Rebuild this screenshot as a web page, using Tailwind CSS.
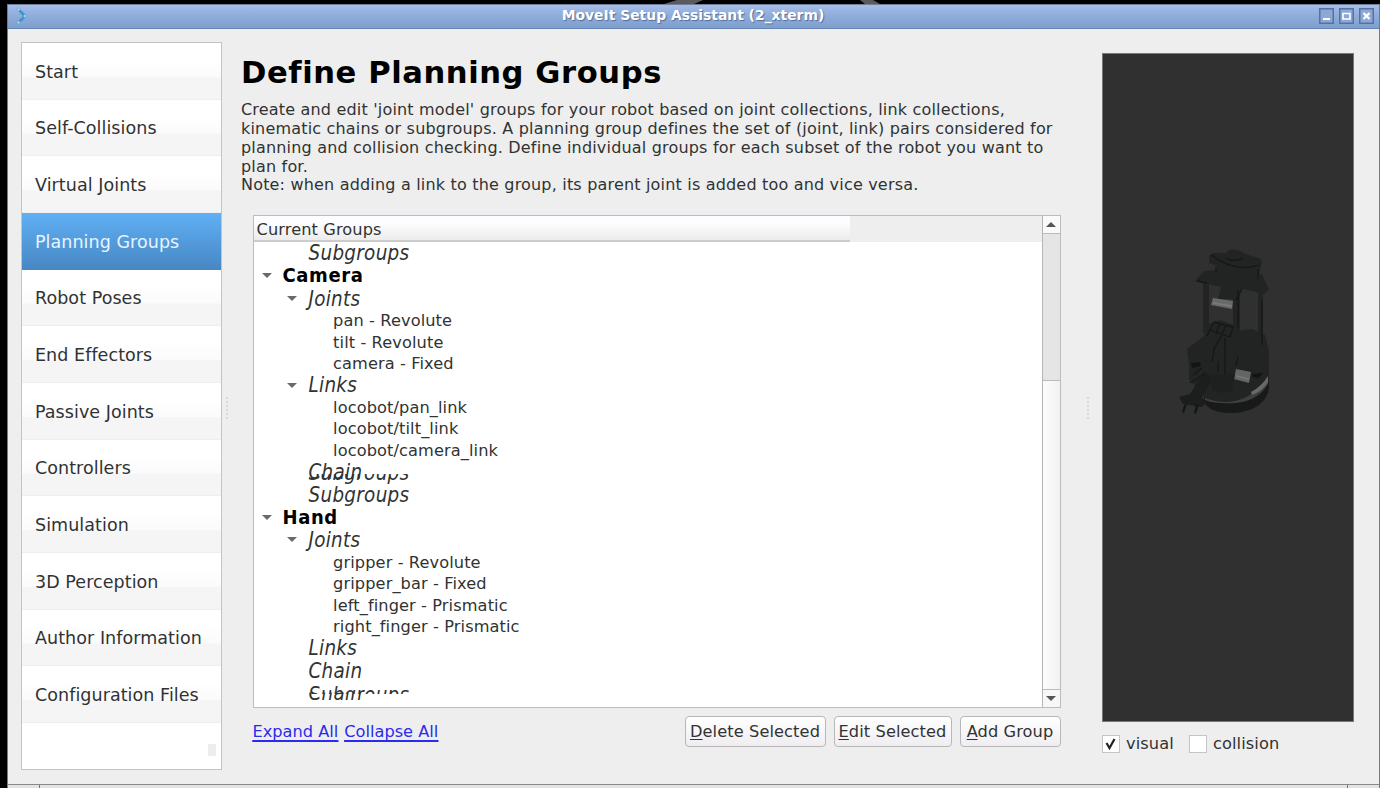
<!DOCTYPE html>
<html lang="en">
<head>
<meta charset="utf-8">
<title>MoveIt Setup Assistant</title>
<script src="https://cdn.jsdelivr.net/npm/@tailwindcss/browser@4"></script>
</head>
<body class="bg-black w-[1380px] h-[788px] overflow-hidden font-['DejaVu_Sans',sans-serif] text-[#303332] text-[16.2px] whitespace-nowrap">
<div class="flex flex-col h-[788px]">
  <svg class="block shrink-0" width="1380" height="4"><path d="M664 4l13-4h26l-9 4zM865 4l-5-4h13l7 4z" fill="#5d5a5e"/></svg>
  <div class="flex flex-col ml-[7px] h-[784px] bg-[#eeeeee] border-l border-r border-[#77797c]">
    <header class="flex items-center h-[25px] shrink-0 border-t border-b border-t-[#71809a] border-b-[#6584b3] bg-linear-to-b from-[#a5bde9] via-[#8eabda] to-[#7e9fcd] pl-[6px] pr-[5px] pb-[2px]">
      <svg width="16" height="20" viewBox="0 0 16 20"><path d="M3 3l4 1 6 6-6 6-4 1 3-4 3-3-3-3z" fill="#4093cb"/><g fill="#b5e6f7" stroke="#5aa9d6"><circle cx="4.500" cy="3.500" r="1.500"/><circle cx="11" cy="10" r="1.500"/><circle cx="4.500" cy="16.500" r="1.500"/></g></svg>
      <h1 class="flex-1 pl-[37px] pb-[2px] text-center text-white text-[13.9px] font-bold leading-5 [text-shadow:1px_1px_1px_#536d97]">MoveIt Setup Assistant (2_xterm)</h1>
      <div class="flex gap-[5px]">
        <svg width="15" height="16"><rect x=".75" y=".75" width="13.5" height="14.5" fill="#8da8d5" stroke="#56729f" stroke-width="1.5"/><path d="M4 11h7" stroke="#fff" stroke-width="2"/></svg>
        <svg width="15" height="16"><rect x=".75" y=".75" width="13.5" height="14.5" fill="#8da8d5" stroke="#56729f" stroke-width="1.5"/><path d="M4 5.5h7v5.500h-7z" fill="none" stroke="#fff" stroke-width="1.6"/></svg>
        <svg width="15" height="16"><rect x=".75" y=".75" width="13.5" height="14.500" fill="#8da8d5" stroke="#56729f" stroke-width="1.5"/><path d="M4.500 5l6 6m0-6l-6 6" stroke="#fff" stroke-width="2.300"/></svg>
      </div>
    </header>

    <main class="flex h-[755px] shrink-0">
      <nav class="ml-[13px] mt-[13px] w-[201px] h-[728px] border-[1.5px] border-[#c4c4c4] bg-white text-[17.5px] tracking-[0.06px] flex flex-col shrink-0">
        <div class="h-[56.67px] pl-[13px] pt-[2px] flex items-center bg-linear-to-b from-white from-30% via-[#fbfafc] via-60% to-[#f5f5f6] to-62% border-b border-[#eeedf0]">Start</div>
        <div class="h-[56.67px] pl-[13px] pt-[2px] flex items-center bg-linear-to-b from-white from-30% via-[#fbfafc] via-60% to-[#f5f5f6] to-62% border-b border-[#eeedf0]">Self-Collisions</div>
        <div class="h-[56.67px] pl-[13px] pt-[2px] flex items-center bg-linear-to-b from-white from-30% via-[#fbfafc] via-60% to-[#f5f5f6] to-62% border-b border-[#eeedf0]">Virtual Joints</div>
        <div class="h-[56.67px] pl-[13px] pt-px flex items-center bg-linear-to-b from-[#60b0f5] to-[#4787c3] text-[#e8f4ff]">Planning Groups</div>
        <div class="h-[56.67px] pl-[13px] pt-[2px] flex items-center bg-linear-to-b from-white from-30% via-[#fbfafc] via-60% to-[#f5f5f6] to-62% border-b border-[#eeedf0]">Robot Poses</div>
        <div class="h-[56.67px] pl-[13px] pt-[2px] flex items-center bg-linear-to-b from-white from-30% via-[#fbfafc] via-60% to-[#f5f5f6] to-62% border-b border-[#eeedf0]">End Effectors</div>
        <div class="h-[56.67px] pl-[13px] pt-[2px] flex items-center bg-linear-to-b from-white from-30% via-[#fbfafc] via-60% to-[#f5f5f6] to-62% border-b border-[#eeedf0]">Passive Joints</div>
        <div class="h-[56.67px] pl-[13px] pt-[2px] flex items-center bg-linear-to-b from-white from-30% via-[#fbfafc] via-60% to-[#f5f5f6] to-62% border-b border-[#eeedf0]">Controllers</div>
        <div class="h-[56.67px] pl-[13px] pt-[2px] flex items-center bg-linear-to-b from-white from-30% via-[#fbfafc] via-60% to-[#f5f5f6] to-62% border-b border-[#eeedf0]">Simulation</div>
        <div class="h-[56.67px] pl-[13px] pt-[2px] flex items-center bg-linear-to-b from-white from-30% via-[#fbfafc] via-60% to-[#f5f5f6] to-62% border-b border-[#eeedf0]">3D Perception</div>
        <div class="h-[56.67px] pl-[13px] pt-[2px] flex items-center bg-linear-to-b from-white from-30% via-[#fbfafc] via-60% to-[#f5f5f6] to-62% border-b border-[#eeedf0]">Author Information</div>
        <div class="h-[56.67px] pl-[13px] pt-[2px] flex items-center bg-linear-to-b from-white from-30% via-[#fbfafc] via-60% to-[#f5f5f6] to-62% border-b border-[#eeedf0]">Configuration Files</div>
        <div class="self-end mt-[21px] mr-[5px] w-2 h-3 bg-[#ededed]"></div>
      </nav>
      <div class="w-[19px] shrink-0 pl-[4px] pt-[368px]"><div class="w-[2px] h-[22px] bg-[repeating-linear-gradient(#d8d8d8_0_2px,transparent_2px_4px)]"></div></div>

      <section class="w-[820px] shrink-0 flex flex-col">
        <h2 class="mt-[25px] h-[38px] leading-[38px] text-[30.6px] tracking-[0.58px] font-bold text-black">Define Planning Groups</h2>
        <p class="mt-[9.400px] leading-[18.75px] text-[16px] tracking-[0.186px]">Create and edit 'joint model' groups for your robot based on joint collections, link collections,<br>kinematic chains or subgroups. A planning group defines the set of (joint, link) pairs considered for<br>planning and collision checking. Define individual groups for each subset of the robot you want to<br>plan for.<br>Note: when adding a link to the group, its parent joint is added too and vice versa.</p>
        <div class="ml-[11.500px] mt-[20px] w-[808px] h-[493px] border-[1.5px] border-[#bcbcbc] bg-white flex shrink-0">
          <div class="flex-1 overflow-hidden">
            <div class="h-[26px] bg-[#eeeeee]"><div class="w-[596px] h-[26px] pl-[3px] pt-[2px] leading-[24px] tracking-[0.1px] bg-linear-to-b from-[#fdfcff] from-30% to-[#ececec] border-b-2 border-[#cccccc]">Current Groups</div></div>
            <div class="leading-[21.4px] tracking-[0.1px]">
              <div class="h-[22.67px] pl-[55px] pt-px"><i class="font-['DejaVu_Sans_Condensed','DejaVu_Sans'] [font-stretch:condensed] text-[20.400px] tracking-[0.3px]">Subgroups</i></div>
              <div class="h-[22.67px] pl-[8px] flex items-center"><svg width="21" height="8"><path d="M0 1h10L5 6z" fill="#6a6a6a"/></svg><b class="font-['DejaVu_Sans_Condensed','DejaVu_Sans'] [font-stretch:condensed] text-[20px] tracking-[0.6px] text-black">Camera</b></div>
              <div class="h-[22.67px] pl-[33px] flex items-center"><svg width="22" height="8"><path d="M0 1h10L5 6z" fill="#6a6a6a"/></svg><i class="font-['DejaVu_Sans_Condensed','DejaVu_Sans'] [font-stretch:condensed] text-[20.400px] tracking-[0.3px] pt-px">Joints</i></div>
              <div class="h-[21.4px] pl-[79.6px]">pan - Revolute</div>
              <div class="h-[21.4px] pl-[79.6px]">tilt - Revolute</div>
              <div class="h-[21.4px] pl-[79.6px]">camera - Fixed</div>
              <div class="h-[22.67px] pl-[33px] flex items-center"><svg width="22" height="8"><path d="M0 1h10L5 6z" fill="#6a6a6a"/></svg><i class="font-['DejaVu_Sans_Condensed','DejaVu_Sans'] [font-stretch:condensed] text-[20.400px] tracking-[0.3px] pt-px">Links</i></div>
              <div class="h-[21.4px] pl-[79.6px]">locobot/pan_link</div>
              <div class="h-[21.4px] pl-[79.6px]">locobot/tilt_link</div>
              <div class="h-[21.4px] pl-[79.6px]">locobot/camera_link</div>
              <div class="relative h-[22.67px] pl-[55px] pt-px"><i class="font-['DejaVu_Sans_Condensed','DejaVu_Sans'] [font-stretch:condensed] text-[20.400px] tracking-[0.3px]">Chain</i><i class="absolute left-[55px] top-[2px] [clip-path:inset(11px_0_0_0)] font-['DejaVu_Sans_Condensed','DejaVu_Sans'] [font-stretch:condensed] text-[20.400px] tracking-[0.3px]">Subgroups</i></div>
              <div class="h-[22.67px] pl-[55px] pt-px"><i class="font-['DejaVu_Sans_Condensed','DejaVu_Sans'] [font-stretch:condensed] text-[20.400px] tracking-[0.3px]">Subgroups</i></div>
              <div class="h-[22.67px] pl-[8px] flex items-center"><svg width="21" height="8"><path d="M0 1h10L5 6z" fill="#6a6a6a"/></svg><b class="font-['DejaVu_Sans_Condensed','DejaVu_Sans'] [font-stretch:condensed] text-[20px] tracking-[0.6px] text-black">Hand</b></div>
              <div class="h-[22.67px] pl-[33px] flex items-center"><svg width="22" height="8"><path d="M0 1h10L5 6z" fill="#6a6a6a"/></svg><i class="font-['DejaVu_Sans_Condensed','DejaVu_Sans'] [font-stretch:condensed] text-[20.400px] tracking-[0.3px] pt-px">Joints</i></div>
              <div class="h-[21.4px] pl-[79.6px]">gripper - Revolute</div>
              <div class="h-[21.4px] pl-[79.6px]">gripper_bar - Fixed</div>
              <div class="h-[21.4px] pl-[79.6px]">left_finger - Prismatic</div>
              <div class="h-[21.4px] pl-[79.6px]">right_finger - Prismatic</div>
              <div class="h-[22.67px] pl-[55px] pt-px"><i class="font-['DejaVu_Sans_Condensed','DejaVu_Sans'] [font-stretch:condensed] text-[20.400px] tracking-[0.3px]">Links</i></div>
              <div class="h-[22.67px] pl-[55px] pt-px"><i class="font-['DejaVu_Sans_Condensed','DejaVu_Sans'] [font-stretch:condensed] text-[20.400px] tracking-[0.3px]">Chain</i></div>
              <div class="relative h-[22.67px] pl-[55px]"><i class="absolute left-[55px] top-0 [clip-path:inset(10px_0_0_0)] font-['DejaVu_Sans_Condensed','DejaVu_Sans'] [font-stretch:condensed] text-[20.400px] tracking-[0.3px]">Chain</i><i class="absolute left-[55px] top-[2px] [clip-path:inset(0_0_12px_0)] font-['DejaVu_Sans_Condensed','DejaVu_Sans'] [font-stretch:condensed] text-[20.400px] tracking-[0.3px]">Subgroups</i></div>
            </div>
          </div>
          <div class="w-[18px] flex flex-col border-l border-[#b5b5b5] shrink-0">
            <div class="h-[18px] border-b-[1.5px] border-[#bbb] flex items-center justify-center bg-[#fafafa]"><svg width="10" height="5"><path d="M0 5h10L5 0z" fill="#555"/></svg></div>
            <div class="h-[147px] bg-[#e5e5e5] border-b-[1.5px] border-[#bbb]"></div>
            <div class="flex-1 bg-linear-to-r from-[#fdfdfd] to-[#f2f1f4]"></div>
            <div class="h-[18px] border-t border-[#bbb] flex items-center justify-center bg-[#f7f7f7]"><svg width="10" height="5"><path d="M0 0h10L5 5z" fill="#555"/></svg></div>
          </div>
        </div>
        <div class="ml-[11.500px] mt-[8px] w-[808px] flex items-center gap-[8px]">
          <div class="flex-1 flex gap-[6px] pt-px text-[#2a2af0] underline underline-offset-[3px] decoration-[1.5px]"><a>Expand All</a><a>Collapse All</a></div>
          <button class="w-[141px] h-[31px] pt-px rounded border-[1.5px] border-[#b8b8b8] bg-linear-to-b from-white to-[#efedf1] tracking-[0.1px]"><u class="underline-offset-2">D</u>elete Selected</button>
          <button class="w-[118px] h-[31px] pt-px rounded border-[1.5px] border-[#b8b8b8] bg-linear-to-b from-white to-[#efedf1] tracking-[0.1px]"><u class="underline-offset-2">E</u>dit Selected</button>
          <button class="w-[101px] h-[31px] pt-px rounded border-[1.5px] border-[#b8b8b8] bg-linear-to-b from-white to-[#efedf1] tracking-[0.1px]"><u class="underline-offset-2">A</u>dd Group</button>
        </div>
      </section>
      <div class="w-[41px] shrink-0 pl-[26px] pt-[368px]"><div class="w-[2px] h-[22px] bg-[repeating-linear-gradient(#d8d8d8_0_2px,transparent_2px_4px)]"></div></div>

      <aside class="w-[252px] shrink-0">
        <div class="mt-[24px] h-[669px] bg-[#303030] border border-[#777]">
          <svg width="250" height="667" viewBox="1103 54 250 667">
            <g fill="#222423">
              <path d="M1203 283h6v50h-6zM1233 289h7v45h-7zM1258 288h5v58h-5z"/>
              <path d="M1209 256L1213 253H1226L1229 250Q1237 248 1244 253L1261 259L1262 263L1259 275L1262 274L1269 289L1264 294L1244 289L1236 291L1233 299H1218L1221 287L1195 281L1204 271L1216 270L1217 266L1209 263Z"/>
              <path d="M1187 349L1204 336L1208 324L1220 320L1234 325L1236 331L1252 329L1265 335L1269 350V390L1262 402L1236 406L1205 400L1201 391L1189 380V366Z"/>
            </g>
            <path d="M1204 398Q1245 416 1268 375L1269 388Q1266 409 1236 413Q1212 414 1204 403Z" fill="#171a18"/>
            <path d="M1205 398Q1245 412 1268 376L1268 384Q1258 401 1236 403Q1214 404 1205 400Z" fill="#3d3f3e"/>
            <path d="M1251 392Q1262 386 1268 376V382Q1263 391 1252 395Z" fill="#666966"/>
            <path d="M1179 397L1190 394L1204 372L1213 378L1202 397L1206 403L1202 407L1183 404Z" fill="#1c1e1d"/>
            <path d="M1184 405L1187 404L1184 413L1182 412ZM1196 404L1199 405L1196 414L1194 413Z" fill="#151716"/>
            <path d="M1213 298L1233 301L1232 309L1211 305Z" fill="#686a69"/><path d="M1213 303L1232 306" stroke="#7b7d7b" stroke-width="1.500"/>
            <path d="M1236 369L1251 372L1249 383L1234 379Z" fill="#646664"/><path d="M1236 376L1249 379" stroke="#777" stroke-width="1.500"/>
            <path d="M1211 374H1235L1232 391Q1221 395 1212 390Z" fill="#1e201f"/>
            <g fill="none" stroke="#151716" stroke-width="1.300"><path d="M1207 336L1214 322L1233 327L1230 337L1210 330M1220 323L1216 334M1226 325L1221 337L1214 349L1212 362M1225 338V374M1218 361V372M1238 357L1236 366M1216 267V272M1258 269V279M1197 281L1207 283M1238 290V328M1262 300V345M1190 383L1206 373M1193 375L1202 368M1242 289L1236 300"/><path d="M1226 258Q1234 263 1243 258M1211 255Q1235 273 1259 265"/></g>
            <path d="M1191 363L1200 362L1201 366L1192 368ZM1252 374L1263 373L1259 378L1252 377Z" fill="#121413"/>
          </svg>
        </div>
        <div class="flex items-center mt-[13px] h-[18px]">
          <span class="w-[18px] h-[18px] border-[1.5px] border-[#c5c5c5] bg-white"><svg width="15" height="15" viewBox="0 0 15 15"><path d="M3.500 7l3 5 5-9" fill="none" stroke="#222" stroke-width="2.200"/></svg></span>
          <span class="ml-[6px] w-[63px] pt-px tracking-[0.1px]">visual</span>
          <span class="w-[18px] h-[18px] border-[1.5px] border-[#c5c5c5] bg-white"></span>
          <span class="ml-[6px] pt-px tracking-[0.1px]">collision</span>
        </div>
      </aside>
    </main>
    <footer class="h-[4px] shrink-0 border-t-[1.5px] border-[#888] bg-[#e2e2e7] flex justify-between px-[31px]"><div class="w-px bg-[#777]"></div><div class="w-px bg-[#777]"></div></footer>
  </div>
</div>
</body>
</html>
